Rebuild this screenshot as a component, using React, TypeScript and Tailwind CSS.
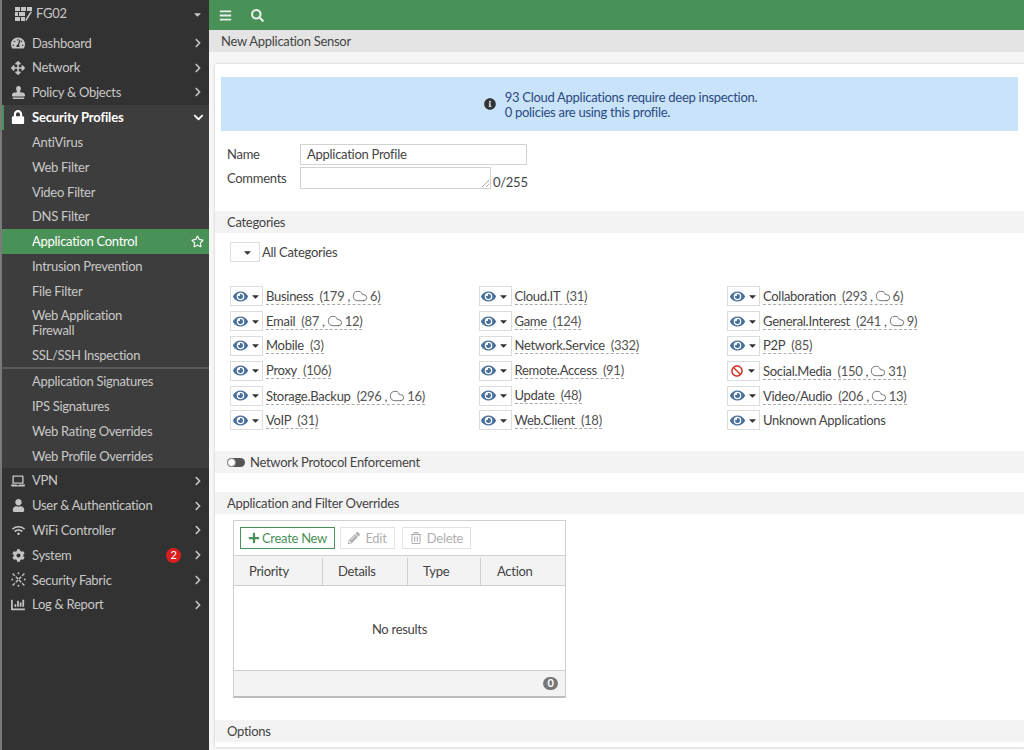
import React from "react";
import {
  FaTachometerAlt,
  FaArrowsAlt,
  FaStamp,
  FaLock,
  FaLaptop,
  FaUser,
  FaWifi,
  FaCog,
  FaChartBar,
  FaEye,
  FaBan,
  FaBars,
  FaSearch,
  FaInfoCircle,
  FaPlus,
  FaPencilAlt,
  FaRegTrashAlt,
  FaRegStar,
  FaChevronRight,
  FaChevronDown,
  FaCaretDown,
} from "react-icons/fa";
import { Cloud } from "lucide-react";

// FortiGate style brick logo
const BrickLogo = () => (
  <svg width="18" height="15" viewBox="0 0 18 15" fill="#c4c4c4">
    <rect x="0" y="0" width="5" height="4" />
    <rect x="6" y="0" width="5" height="4" />
    <rect x="12" y="0" width="5" height="4" />
    <rect x="0" y="5" width="3" height="4" />
    <rect x="4" y="5" width="6" height="4" />
    <rect x="0" y="10" width="5" height="4" />
    <rect x="6" y="10" width="4" height="4" />
    <path d="M17 5 L12 13 L10.5 14.5 L11 11.5 L15.5 4.5 Z" />
  </svg>
);

const FabricIcon = () => (
  <svg width="15" height="15" viewBox="0 0 14 14" fill="none" stroke="#c4c4c4" strokeWidth="1.3">
    <path d="M1.5 1.5 L12.5 12.5 M12.5 1.5 L1.5 12.5" strokeDasharray="3 1.2" />
    <circle cx="1.2" cy="7" r="0.9" fill="#c4c4c4" stroke="none" />
    <circle cx="12.8" cy="7" r="0.9" fill="#c4c4c4" stroke="none" />
    <circle cx="7" cy="1.2" r="0.9" fill="#c4c4c4" stroke="none" />
    <circle cx="7" cy="12.8" r="0.9" fill="#c4c4c4" stroke="none" />
  </svg>
);

const mainTop = [
  { label: "Dashboard", icon: <FaTachometerAlt size={14} /> },
  { label: "Network", icon: <FaArrowsAlt size={14} /> },
  { label: "Policy & Objects", icon: <FaStamp size={13} /> },
];

const subTop = ["AntiVirus", "Web Filter", "Video Filter", "DNS Filter"];
const subMid = ["Intrusion Prevention", "File Filter"];
const subBottom = ["Application Signatures", "IPS Signatures", "Web Rating Overrides", "Web Profile Overrides"];

const mainBottom = [
  { label: "VPN", icon: <FaLaptop size={14} /> },
  { label: "User & Authentication", icon: <FaUser size={13} /> },
  { label: "WiFi Controller", icon: <FaWifi size={13} /> },
  { label: "System", icon: <FaCog size={13} />, badge: "2" },
  { label: "Security Fabric", icon: <FabricIcon /> },
  { label: "Log & Report", icon: <FaChartBar size={14} /> },
];

type Cat = { name: string; count?: string; cloud?: string; blocked?: boolean };

const categories: Cat[] = [
  { name: "Business", count: "179", cloud: "6" },
  { name: "Cloud.IT", count: "31" },
  { name: "Collaboration", count: "293", cloud: "6" },
  { name: "Email", count: "87", cloud: "12" },
  { name: "Game", count: "124" },
  { name: "General.Interest", count: "241", cloud: "9" },
  { name: "Mobile", count: "3" },
  { name: "Network.Service", count: "332" },
  { name: "P2P", count: "85" },
  { name: "Proxy", count: "106" },
  { name: "Remote.Access", count: "91" },
  { name: "Social.Media", count: "150", cloud: "31", blocked: true },
  { name: "Storage.Backup", count: "296", cloud: "16" },
  { name: "Update", count: "48" },
  { name: "Video/Audio", count: "206", cloud: "13" },
  { name: "VoIP", count: "31" },
  { name: "Web.Client", count: "18" },
  { name: "Unknown Applications" },
];

const NavRow = ({ label, icon, badge }: { label: string; icon: React.ReactNode; badge?: string }) => (
  <div className="flex h-[24.8px] items-center text-[#c8c8c8]">
    <span className="ml-[8px] flex w-[16px] justify-center text-[#c4c4c4]">{icon}</span>
    <span className="ml-[6px] flex-1 pt-[1px]">{label}</span>
    {badge && (
      <span className="mr-[12px] flex h-[15px] w-[15px] items-center justify-center rounded-full bg-[#d9201f] text-[11px] text-white">
        {badge}
      </span>
    )}
    <FaChevronRight size={10} className="mr-[6px] text-[#c4c4c4]" />
  </div>
);

const SubRow = ({ label }: { label: string }) => (
  <div className="flex h-[24.8px] items-center pl-[30px] pt-[1px] text-[#c8c8c8]">{label}</div>
);

const SectionHeader = ({ children, className }: { children: React.ReactNode; className?: string }) => (
  <div className={`flex h-[22px] items-center bg-[#f3f3f3] pl-[12px] pt-[1px] text-[#444] ${className ?? ""}`}>
    {children}
  </div>
);

const CategoryCell = ({ cat }: { cat: Cat }) => (
  <div className="flex h-[24.8px] items-center">
    <div className="flex h-[20px] w-[33px] items-center justify-center gap-[2px] border border-[#dcdcdc] bg-white">
      {cat.blocked ? (
        <FaBan size={12} className="mx-[1px] text-[#d2342a]" />
      ) : (
        <FaEye size={15} className="text-[#48709c]" />
      )}
      <FaCaretDown size={11} className="text-[#333]" />
    </div>
    {cat.count ? (
      <span className="ml-[3px] border-b border-dashed border-[#aaa] pt-[1px] leading-[15px] text-[#444]">
        {cat.name}
        <span className="ml-[6px] text-[#555]">
          ({cat.count}
          {cat.cloud && (
            <>
              <span className="ml-[3px] mr-[2px]">,</span>
              <Cloud size={16} strokeWidth={1.2} className="mr-[2px] inline-block align-[-3px] text-[#555]" />
              {cat.cloud}
            </>
          )}
          )
        </span>
      </span>
    ) : (
      <span className="ml-[3px] pt-[1px] text-[#444]">{cat.name}</span>
    )}
  </div>
);

export default function App() {
  return (
    <div className="flex h-[750px] w-[1024px] overflow-hidden bg-[#f6f6f6] font-['Lato','Liberation_Sans',sans-serif] text-[13px] tracking-[-0.28px]">
      {/* Sidebar */}
      <aside className="h-full w-[209px] shrink-0 border-l-2 border-[#7a7a7a] bg-[#323232]">
        <div className="flex h-[30.4px] items-center pb-[2px] pl-[13px] text-[#c8c8c8]">
          <BrickLogo />
          <span className="ml-[3px] flex-1 text-[13px]">FG02</span>
          <FaCaretDown size={11} className="mr-[6px]" />
        </div>
        {mainTop.map((m) => (
          <NavRow key={m.label} label={m.label} icon={m.icon} />
        ))}
        <div className="flex h-[25px] items-center border-l-2 border-[#4a9157] bg-[#3d3d3d] font-bold tracking-[-0.15px] text-white">
          <span className="ml-[6px] flex w-[16px] justify-center">
            <FaLock size={14} />
          </span>
          <span className="ml-[6px] flex-1 pt-[1px]">Security Profiles</span>
          <FaChevronDown size={11} className="mr-[5px]" />
        </div>
        <div className="bg-[#3d3d3d]">
          {subTop.map((s) => (
            <SubRow key={s} label={s} />
          ))}
          <div className="flex h-[24.8px] items-center bg-[#4a9157] pl-[30px] pt-[1px] text-white">
            <span className="flex-1">Application Control</span>
            <FaRegStar size={13} className="mr-[5px]" />
          </div>
          {subMid.map((s) => (
            <SubRow key={s} label={s} />
          ))}
          <div className="pb-[4px] pl-[30px] pt-[5px] leading-[15px] text-[#c8c8c8]">
            Web Application
            <br />
            Firewall
          </div>
          <SubRow label="SSL/SSH Inspection" />
          <div className="border-t-2 border-[#5a5a5a]">
            {subBottom.map((s) => (
              <SubRow key={s} label={s} />
            ))}
          </div>
        </div>
        {mainBottom.map((m) => (
          <NavRow key={m.label} label={m.label} icon={m.icon} badge={m.badge} />
        ))}
      </aside>

      {/* Main */}
      <main className="flex min-w-0 flex-1 flex-col">
        <div className="flex h-[30px] shrink-0 items-center bg-[#4a9157] pl-[10px] text-[#e6efe8]">
          <FaBars size={13} />
          <FaSearch size={13} className="ml-[19px]" />
        </div>
        <div className="flex h-[22px] shrink-0 items-center bg-[#e4e4e4] pl-[12px] pt-[2px] text-[#444]">
          New Application Sensor
        </div>

        <div className="mb-[3px] ml-[6px] mt-[12px] flex-1 rounded-tl-[2px] bg-white shadow-[0_0_3px_rgba(0,0,0,0.2)]">
          <div className="pl-[6px] pr-[6px] pt-[13px]">
            <div className="flex h-[54px] items-center justify-center bg-[#c9e3fb]">
              <FaInfoCircle size={12} className="ml-[2px] mr-[9px] text-[#333]" />
              <div className="pt-[1px] leading-[15px] text-[#2b4a80]">
                <div>93 Cloud Applications require deep inspection.</div>
                <div>0 policies are using this profile.</div>
              </div>
            </div>
          </div>

          <div className="mt-[13px] flex h-[21px] items-center pl-[12px] text-[#444]">
            <span className="w-[73px] pt-[1px]">Name</span>
            <div className="flex h-[21px] w-[227px] items-center border border-[#d2d2d2] pl-[6px] pt-[1px]">
              Application Profile
            </div>
          </div>
          <div className="mt-[2px] flex items-start pl-[12px] text-[#444]">
            <span className="w-[73px] pt-[1px] leading-[21px]">Comments</span>
            <div className="relative h-[22px] w-[191px] border border-[#d2d2d2]">
              <svg width="8" height="8" viewBox="0 0 8 8" className="absolute bottom-[1px] right-[1px]" stroke="#999" strokeWidth="0.8">
                <path d="M1 8 L8 1 M5 8 L8 5" />
              </svg>
            </div>
            <span className="ml-[2px] mt-[8px] leading-[15px]">0/255</span>
          </div>

          <SectionHeader className="mt-[21px]">Categories</SectionHeader>
          <div className="mt-[9px] flex h-[20px] items-center pl-[15px] text-[#444]">
            <div className="flex h-[20px] w-[30px] items-center justify-end border border-[#dcdcdc] pr-[6px]">
              <FaCaretDown size={11} className="text-[#333]" />
            </div>
            <span className="ml-[2px] pt-[1px]">All Categories</span>
          </div>

          <div className="mt-[22px] grid grid-cols-[248.5px_248.5px_1fr] pl-[15px]">
            {categories.map((c) => (
              <CategoryCell key={c.name} cat={c} />
            ))}
          </div>

          <SectionHeader className="mt-[18px]">
            <span className="relative mr-[5px] inline-block h-[9px] w-[18px] rounded-full bg-[#555]">
              <span className="absolute left-0 top-0 h-[9px] w-[9px] rounded-full border border-[#888] bg-white" />
            </span>
            <span className="text-[#444]">Network Protocol Enforcement</span>
          </SectionHeader>

          <SectionHeader className="mt-[19px]">Application and Filter Overrides</SectionHeader>

          <div className="ml-[18px] mt-[6px] w-[333px] border border-b-2 border-[#cfcfcf] border-b-[#bdbdbd]">
            <div className="flex h-[35px] items-center border-b border-[#cfcfcf] pl-[6px]">
              <div className="flex h-[22px] w-[95px] items-center justify-center border border-[#4a9157] pt-[1px] text-[#4a9157]">
                <FaPlus size={12} className="mr-[2px]" />
                Create New
              </div>
              <div className="ml-[5px] flex h-[22px] w-[55px] items-center justify-center border border-[#e2e2e2] pt-[1px] text-[#b0b0b0]">
                <FaPencilAlt size={12} className="mr-[5px]" />
                Edit
              </div>
              <div className="ml-[7px] flex h-[22px] w-[69px] items-center justify-center border border-[#e2e2e2] pt-[1px] text-[#b0b0b0]">
                <FaRegTrashAlt size={12} className="mr-[5px]" />
                Delete
              </div>
            </div>
            <div className="flex h-[30px] items-center border-b border-[#cfcfcf] bg-[#f3f3f3] pt-[2px] text-[#444]">
              <div className="flex h-full w-[89px] items-center border-r border-[#cfcfcf] pl-[15px]">Priority</div>
              <div className="flex h-full w-[85px] items-center border-r border-[#cfcfcf] pl-[15px]">Details</div>
              <div className="flex h-full w-[73px] items-center border-r border-[#cfcfcf] pl-[15px]">Type</div>
              <div className="flex h-full flex-1 items-center pl-[16px]">Action</div>
            </div>
            <div className="flex h-[84px] items-center justify-center pt-[3px] text-[#444]">No results</div>
            <div className="flex h-[26px] items-center justify-end border-t border-[#cfcfcf] bg-[#f3f3f3] pr-[7px]">
              <span className="flex h-[13px] w-[15px] items-center justify-center rounded-full bg-[#777] text-[11px] font-bold text-white">
                0
              </span>
            </div>
          </div>

          <SectionHeader className="mt-[22px]">Options</SectionHeader>
        </div>
      </main>
    </div>
  );
}
